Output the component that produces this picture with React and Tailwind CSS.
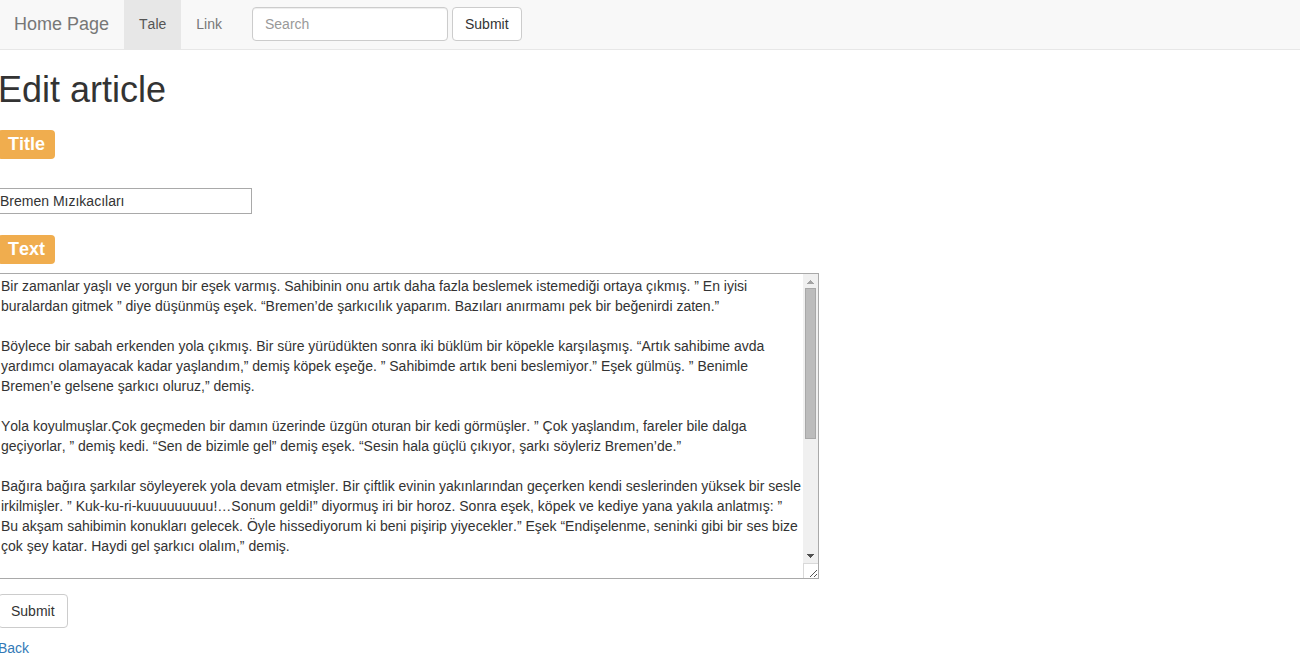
import React from 'react';

const story = [
  'Bir zamanlar yaşlı ve yorgun bir eşek varmış. Sahibinin onu artık daha fazla beslemek istemediği ortaya çıkmış. ” En iyisi buralardan gitmek ” diye düşünmüş eşek. “Bremen’de şarkıcılık yaparım. Bazıları anırmamı pek bir beğenirdi zaten.”',
  'Böylece bir sabah erkenden yola çıkmış. Bir süre yürüdükten sonra iki büklüm bir köpekle karşılaşmış. “Artık sahibime avda yardımcı olamayacak kadar yaşlandım,” demiş köpek eşeğe. ” Sahibimde artık beni beslemiyor.” Eşek gülmüş. ” Benimle Bremen’e gelsene şarkıcı oluruz,” demiş.',
  'Yola koyulmuşlar.Çok geçmeden bir damın üzerinde üzgün oturan bir kedi görmüşler. ” Çok yaşlandım, fareler bile dalga geçiyorlar, ” demiş kedi. “Sen de bizimle gel” demiş eşek. “Sesin hala güçlü çıkıyor, şarkı söyleriz Bremen’de.”',
  'Bağıra bağıra şarkılar söyleyerek yola devam etmişler. Bir çiftlik evinin yakınlarından geçerken kendi seslerinden yüksek bir sesle irkilmişler. ” Kuk-ku-ri-kuuuuuuuuu!…Sonum geldi!” diyormuş iri bir horoz. Sonra eşek, köpek ve kediye yana yakıla anlatmış: ” Bu akşam sahibimin konukları gelecek. Öyle hissediyorum ki beni pişirip yiyecekler.” Eşek “Endişelenme, seninki gibi bir ses bize çok şey katar. Haydi gel şarkıcı olalım,” demiş.',
].join('\n\n');

function Button({ children }) {
  return (
    <button
      type="submit"
      className="h-[34px] cursor-pointer rounded border border-[#ccc] bg-white px-3 text-sm text-[#333] hover:bg-[#e6e6e6]"
    >
      {children}
    </button>
  );
}

function FieldLabel({ htmlFor, children }) {
  return (
    <label
      htmlFor={htmlFor}
      className="block w-fit rounded bg-[#f0ad4e] px-2.5 pt-0.5 pb-[3px] text-lg leading-6 font-bold text-white"
    >
      {children}
    </label>
  );
}

function Navbar() {
  return (
    <header className="flex border-b border-[#e7e7e7] bg-[#f8f8f8] pl-px">
      <a href="#home" className="px-[15px] pt-3.5 pb-[15px] text-lg leading-5 text-[#777]">
        Home Page
      </a>
      <nav className="flex text-sm leading-5">
        <a href="#tale" className="bg-[#e7e7e7] px-[15px] pt-3.5 pb-[15px] text-[#555]">
          Tale
        </a>
        <a href="#link" className="px-[15px] pt-3.5 pb-[15px] text-[#777]">
          Link
        </a>
      </nav>
      <form role="search" className="flex items-start gap-1 px-[15px] pt-[7px]" onSubmit={(e) => e.preventDefault()}>
        <input
          type="text"
          aria-label="Search"
          placeholder="Search"
          className="h-[34px] w-[196px] rounded border border-[#ccc] bg-white px-3 text-sm text-[#555] shadow-[inset_0_1px_1px_rgba(0,0,0,0.075)] placeholder:text-[#999]"
        />
        <Button>Submit</Button>
      </form>
    </header>
  );
}

function ScrollRail() {
  return (
    <div aria-hidden="true" className="flex w-[15px] shrink-0 flex-col bg-[#f0f0f0]">
      <svg viewBox="0 0 15 14" className="h-3.5 w-[15px]" shapeRendering="crispEdges">
        <path d="M7 6h1v1h1v1h1v1h1v1H4V9h1V8h1V7h1z" fill="#a3a3a3" />
      </svg>
      <div className="mx-0.5 h-[151px] border border-[#a8a8a8] bg-[#bcbcbc]" />
      <div className="flex-1" />
      <svg viewBox="0 0 15 14" className="h-3.5 w-[15px]" shapeRendering="crispEdges">
        <path d="M4 5h7v1h-1v1H9v1H8v1H7V8H6V7H5V6H4z" fill="#505050" />
      </svg>
      <svg viewBox="0 0 15 15" className="size-[15px]" shapeRendering="crispEdges">
        <path d="M0 0h15v15H0z" fill="#fff" />
        <path d="M0 0h15v1H1v14H0z" fill="#d9d9d9" />
        <path
          d="M7 13h1v1H7zM8 12h1v1H8zM9 11h1v1H9zM10 10h1v1h-1zM11 9h1v1h-1zM12 8h1v1h-1zM13 7h1v1h-1zM11 13h1v1h-1zM12 12h1v1h-1zM13 11h1v1h-1z"
          fill="#555"
        />
      </svg>
    </div>
  );
}

export default function App() {
  return (
    <div className="overflow-x-clip bg-white font-['Liberation_Sans',Arial,sans-serif] text-sm leading-5 text-[#333] [font-kerning:none]">
      <div className="-ml-0.5">
        <Navbar />
        <main className="pt-5">
          <h1 className="text-4xl leading-10 font-normal">Edit article</h1>
          <form className="mt-5 flex flex-col items-start" onSubmit={(e) => e.preventDefault()}>
            <FieldLabel htmlFor="article-title">Title</FieldLabel>
            <input
              id="article-title"
              type="text"
              defaultValue="Bremen Mızıkacıları"
              className="mt-[29px] h-[26px] w-[254px] border border-[#a9a9a9] bg-white px-px"
            />
            <div className="mt-[21px]">
              <FieldLabel htmlFor="article-text">Text</FieldLabel>
            </div>
            <div className="mt-[9px] flex w-[821px] max-w-full border border-[#a9a9a9] bg-white">
              <textarea
                id="article-text"
                rows={15}
                defaultValue={story}
                spellCheck={false}
                className="block min-w-0 flex-1 resize-none p-0.5 outline-none [font-kerning:none] [scrollbar-width:none]"
              />
              <ScrollRail />
            </div>
            <div className="mt-[15px]">
              <Button>Submit</Button>
            </div>
          </form>
          <a href="#back" className="mt-2.5 inline-block text-[#337ab7] hover:underline">
            Back
          </a>
        </main>
      </div>
    </div>
  );
}
